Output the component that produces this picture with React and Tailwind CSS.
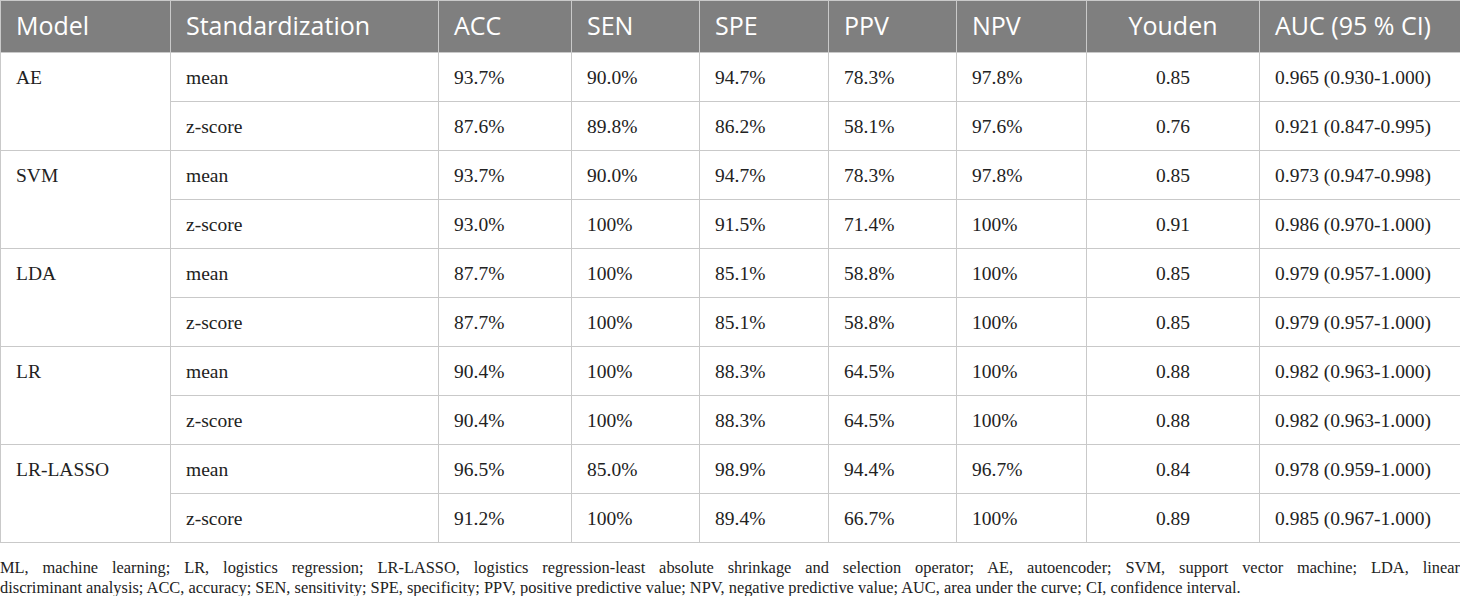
import React from 'react';

const headers = ['Model', 'Standardization', 'ACC', 'SEN', 'SPE', 'PPV', 'NPV', 'Youden', 'AUC (95 % CI)'];
const widths = ['w-[170px]', 'w-[268px]', 'w-[133px]', 'w-[128px]', 'w-[129px]', 'w-[128px]', 'w-[130px]', 'w-[173px]', 'w-[201px]'];

const groups = [
  {
    model: 'AE',
    rows: [
      ['mean', '93.7%', '90.0%', '94.7%', '78.3%', '97.8%', '0.85', '0.965 (0.930-1.000)'],
      ['z-score', '87.6%', '89.8%', '86.2%', '58.1%', '97.6%', '0.76', '0.921 (0.847-0.995)'],
    ],
  },
  {
    model: 'SVM',
    rows: [
      ['mean', '93.7%', '90.0%', '94.7%', '78.3%', '97.8%', '0.85', '0.973 (0.947-0.998)'],
      ['z-score', '93.0%', '100%', '91.5%', '71.4%', '100%', '0.91', '0.986 (0.970-1.000)'],
    ],
  },
  {
    model: 'LDA',
    rows: [
      ['mean', '87.7%', '100%', '85.1%', '58.8%', '100%', '0.85', '0.979 (0.957-1.000)'],
      ['z-score', '87.7%', '100%', '85.1%', '58.8%', '100%', '0.85', '0.979 (0.957-1.000)'],
    ],
  },
  {
    model: 'LR',
    rows: [
      ['mean', '90.4%', '100%', '88.3%', '64.5%', '100%', '0.88', '0.982 (0.963-1.000)'],
      ['z-score', '90.4%', '100%', '88.3%', '64.5%', '100%', '0.88', '0.982 (0.963-1.000)'],
    ],
  },
  {
    model: 'LR-LASSO',
    rows: [
      ['mean', '96.5%', '85.0%', '98.9%', '94.4%', '96.7%', '0.84', '0.978 (0.959-1.000)'],
      ['z-score', '91.2%', '100%', '89.4%', '66.7%', '100%', '0.89', '0.985 (0.967-1.000)'],
    ],
  },
];

const App = () => {
  return (
    <div className="w-[1460px] h-[596px] overflow-hidden bg-white">
      <table className="w-[1460px] table-fixed border-collapse border border-[#c9c9c9]">
        <colgroup>
          {widths.map((w, i) => (
            <col key={i} className={w} />
          ))}
        </colgroup>
        <thead>
          <tr className="h-[52px] bg-[#7f7f7f]">
            {headers.map((h, i) => (
              <th
                key={h}
                className={`border border-[#c9c9c9] px-[15px] pb-[2px] font-normal text-white text-[25px] font-['Open_Sans',sans-serif] ${
                  i === 7 ? 'text-center' : 'text-left'
                }`}
              >
                {h}
              </th>
            ))}
          </tr>
        </thead>
        <tbody className="font-['Liberation_Serif',serif] text-[19.5px] text-[#222]">
          {groups.map((g) =>
            g.rows.map((r, ri) => (
              <tr key={g.model + ri} className="h-[49px]">
                {ri === 0 && (
                  <td rowSpan={2} className="border border-[#c9c9c9] px-[15px] align-top">
                    <div className="h-[49px] flex items-center">{g.model}</div>
                  </td>
                )}
                {r.map((c, ci) => (
                  <td
                    key={ci}
                    className={`border border-[#c9c9c9] px-[15px] pt-[2px] ${ci === 6 ? 'text-center' : 'text-left'}`}
                  >
                    {c}
                  </td>
                ))}
              </tr>
            ))
          )}
        </tbody>
      </table>
      <div className="mt-[15px] font-['Liberation_Serif',serif] text-[16.4px] leading-[20px] text-[#222]">
        <p className="text-justify [text-align-last:justify]">
          ML, machine learning; LR, logistics regression; LR-LASSO, logistics regression-least absolute shrinkage and
          selection operator; AE, autoencoder; SVM, support vector machine; LDA, linear
        </p>
        <p>
          discriminant analysis; ACC, accuracy; SEN, sensitivity; SPE, specificity; PPV, positive predictive value; NPV,
          negative predictive value; AUC, area under the curve; CI, confidence interval.
        </p>
      </div>
    </div>
  );
};

export default App;
